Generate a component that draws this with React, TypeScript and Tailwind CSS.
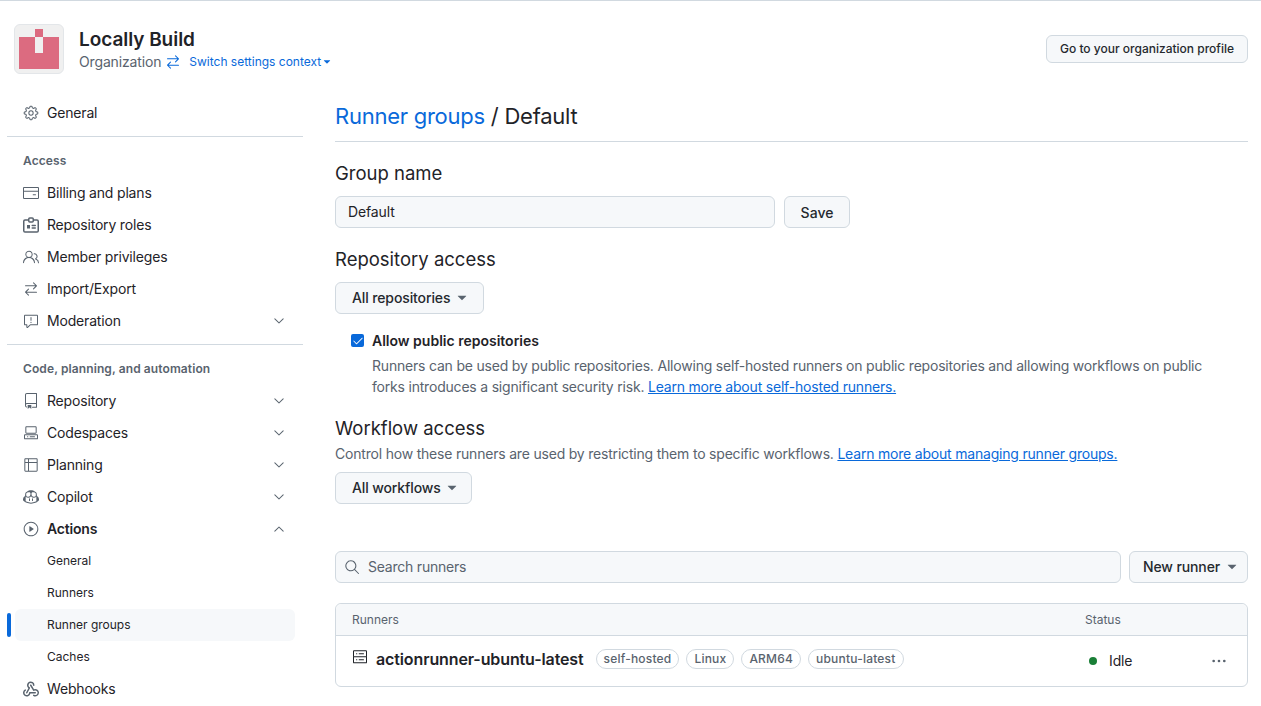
import {
  GoArrowSwitch,
  GoCheck,
  GoChevronDown,
  GoChevronUp,
  GoCodespaces,
  GoCopilot,
  GoCreditCard,
  GoGear,
  GoKebabHorizontal,
  GoPeople,
  GoPlay,
  GoReport,
  GoRepo,
  GoSearch,
  GoServer,
  GoTable,
  GoTriangleDown,
} from "react-icons/go"

type IconProps = { size?: number; className?: string }

// not in react-icons' octicons, drawn by hand
function IdBadgeIcon({ size = 16, className }: IconProps) {
  return (
    <svg width={size} height={size} viewBox="0 0 16 16" fill="none" stroke="currentColor" strokeWidth="1.5" className={className}>
      <path d="M5.5 3H2a1.25 1.25 0 0 0-1.25 1.25v9.5A1.25 1.25 0 0 0 2 15h12a1.25 1.25 0 0 0 1.25-1.25v-9.5A1.25 1.25 0 0 0 14 3h-3.5" />
      <rect x="5.75" y="1" width="4.5" height="4" rx="1" />
      <rect x="4" y="8" width="3" height="3.5" fill="currentColor" stroke="none" />
      <path d="M9.25 8.5h3M9.25 11h3" strokeLinecap="round" />
    </svg>
  )
}

function WebhookIcon({ size = 16, className }: IconProps) {
  return (
    <svg width={size} height={size} viewBox="0 0 16 16" fill="currentColor" className={className}>
      <path d="M5.5 4.25a2.25 2.25 0 0 1 4.5 0 .75.75 0 0 0 1.5 0 3.75 3.75 0 1 0-6.14 2.889l-2.272 4.258a.75.75 0 0 0 1.324.706L7 7.25a.75.75 0 0 0-.309-1.015A2.25 2.25 0 0 1 5.5 4.25Z" />
      <path d="M7.364 3.607a.75.75 0 0 1 1.03.257l2.608 4.349a3.75 3.75 0 1 1-.628 6.785.75.75 0 0 1 .752-1.299 2.25 2.25 0 1 0-.033-3.88.75.75 0 0 1-1.03-.256L7.107 4.636a.75.75 0 0 1 .257-1.03Z" />
      <path d="M2.9 8.776A.75.75 0 0 1 2.625 9.8 2.25 2.25 0 1 0 6 11.75a.75.75 0 0 1 .75-.751h5.5a.75.75 0 0 1 0 1.5H7.425a3.751 3.751 0 1 1-5.55-3.998.75.75 0 0 1 1.024.274Z" />
    </svg>
  )
}

function NavItem({
  icon: Icon,
  label,
  chevron,
  bold,
}: {
  icon: React.ComponentType<IconProps>
  label: string
  chevron?: "up" | "down"
  bold?: boolean
}) {
  return (
    <div className="h-8 flex items-center pl-4 pr-2 text-[14px] tracking-[-0.18px] text-[#1f2328]">
      <Icon size={16} className="text-[#59636e] mr-2 shrink-0" />
      <span className={bold ? "font-semibold -mt-[2px]" : "-mt-[2px]"}>{label}</span>
      {chevron === "down" && <GoChevronDown size={16} className="ml-auto text-[#59636e]" />}
      {chevron === "up" && <GoChevronUp size={16} className="ml-auto text-[#59636e]" />}
    </div>
  )
}

function SubItem({ label, active }: { label: string; active?: boolean }) {
  return (
    <div className="relative h-8 flex items-center pl-10 text-[12px] text-[#1f2328]">
      {active && (
        <>
          <div className="absolute left-0 top-[4px] w-1 h-6 rounded-md bg-[#0969da]" />
          <div className="absolute left-2 right-0 top-0 bottom-0 rounded-md bg-[#f6f8fa]" />
        </>
      )}
      <span className="relative">{label}</span>
    </div>
  )
}

function SelectButton({ label, className }: { label: string; className: string }) {
  return (
    <div
      className={`h-8 flex items-center gap-1 rounded-md border border-[#d1d9e0] bg-[#f6f8fa] text-[14px] tracking-[-0.12px] font-medium text-[#25292e] ${className}`}
    >
      <span className="-mt-[2px]">{label}</span>
      <GoTriangleDown size={16} className="text-[#59636e]" />
    </div>
  )
}

function Label({ children }: { children: string }) {
  return (
    <span className="h-5 flex items-center rounded-full border border-[#d1d9e0] px-[7px] text-[12px] tracking-[0.2px] font-medium text-[#59636e]">
      {children}
    </span>
  )
}

function SectionTitle({ children, className }: { children: string; className: string }) {
  return <h2 className={`text-[18.5px] leading-[28px] ${className}`}>{children}</h2>
}

export default function App() {
  return (
    <div className="h-[706px] overflow-hidden bg-white border-t border-[#d1d9e0] font-['Inter',sans-serif] text-[#1f2328]">
      <header className="flex items-center justify-between pt-[23px] pl-[14px] pr-[13px]">
        <div className="flex items-center">
          <div className="w-[50px] h-[50px] rounded-md border border-[#e3e6e9] bg-[#f0f0f0] shrink-0">
            <svg viewBox="0 0 48 48" className="w-full h-full">
              <rect x="4" y="12" width="40" height="32" fill="#dc6b80" />
              <rect x="20" y="4" width="8" height="8" fill="#dc6b80" />
              <rect x="20" y="12" width="8" height="16" fill="#f0f0f0" />
            </svg>
          </div>
          <div className="ml-[15px] -mt-[2px]">
            <div className="pt-px text-[19px] leading-[30px] tracking-[-0.05px] font-semibold">Locally Build</div>
            <div className="-mt-[3px] flex items-center text-[14px] leading-5 tracking-[-0.15px] text-[#59636e]">
              Organization
              <GoArrowSwitch size={16} className="text-[#0969da] ml-[4px] mr-[8px]" />
              <span className="text-[12px] tracking-normal text-[#0969da]">Switch settings context</span>
              <GoTriangleDown size={12} className="text-[#0969da]" />
            </div>
          </div>
        </div>
        <div className="h-7 w-[202px] flex items-center justify-center rounded-md border border-[#d1d9e0] bg-[#f6f8fa] text-[12px] font-medium text-[#25292e]">
          Go to your organization profile
        </div>
      </header>

      <div className="flex mt-[23px] pl-[7px] pr-[13px]">
        <aside className="w-[288px] shrink-0">
          <NavItem icon={GoGear} label="General" />
          <div className="h-px bg-[#d1d9e0] mt-[7px] -mr-2" />
          <div className="pl-4 mt-[16px] mb-[8px] h-4 flex items-center text-[12px] tracking-[0.1px] font-semibold text-[#59636e]">Access</div>
          <NavItem icon={GoCreditCard} label="Billing and plans" />
          <NavItem icon={IdBadgeIcon} label="Repository roles" />
          <NavItem icon={GoPeople} label="Member privileges" />
          <NavItem icon={GoArrowSwitch} label="Import/Export" />
          <NavItem icon={GoReport} label="Moderation" chevron="down" />
          <div className="h-px bg-[#d1d9e0] mt-[7px] -mr-2" />
          <div className="pl-4 mt-[16px] mb-[8px] h-4 flex items-center text-[12px] tracking-[0.1px] font-semibold text-[#59636e]">
            Code, planning, and automation
          </div>
          <NavItem icon={GoRepo} label="Repository" chevron="down" />
          <NavItem icon={GoCodespaces} label="Codespaces" chevron="down" />
          <NavItem icon={GoTable} label="Planning" chevron="down" />
          <NavItem icon={GoCopilot} label="Copilot" chevron="down" />
          <NavItem icon={GoPlay} label="Actions" chevron="up" bold />
          <SubItem label="General" />
          <SubItem label="Runners" />
          <SubItem label="Runner groups" active />
          <SubItem label="Caches" />
          <NavItem icon={WebhookIcon} label="Webhooks" />
        </aside>

        <main className="flex-1 ml-10 min-w-0">
          <h1 className="h-[45px] flex items-center border-b border-[#d1d9e0] pb-[8px] pt-[3px] text-[22px] tracking-[-0.25px] font-normal">
            <span className="text-[#0969da]">Runner groups</span>
            <span className="whitespace-pre"> / Default</span>
          </h1>

          <SectionTitle className="mt-[17px] pb-[2px]">Group name</SectionTitle>
          <div className="mt-[7px] flex gap-[9px]">
            <div className="w-[440px] h-8 flex items-center px-3 pb-[2px] rounded-md border border-[#d1d9e0] bg-[#f6f8fa] text-[14px] tracking-[-0.12px]">
              Default
            </div>
            <div className="w-[66px] h-8 flex items-center justify-center rounded-md border border-[#d1d9e0] bg-[#f6f8fa] text-[14px] font-medium text-[#25292e]">
              Save
            </div>
          </div>

          <SectionTitle className="mt-[17px] pb-[2px]">Repository access</SectionTitle>
          <SelectButton label="All repositories" className="mt-[7px] w-[149px] pl-4" />

          <div className="mt-[17px] pl-4 flex">
            <div className="mt-[3px] w-[13px] h-[13px] rounded-[2px] bg-[#0969da] flex items-center justify-center shrink-0">
              <GoCheck size={12} className="text-white" />
            </div>
            <div className="ml-2">
              <div className="text-[14px] leading-5 font-semibold">Allow public repositories</div>
              <p className="mt-[4px] max-w-[860px] text-[14px] leading-[21px] tracking-[-0.2px] text-[#59636e]">
                Runners can be used by public repositories. Allowing self-hosted runners on public repositories and
                allowing workflows on public forks introduces a significant security risk.{" "}
                <span className="text-[#0969da] underline">Learn more about self-hosted runners.</span>
              </p>
            </div>
          </div>

          <SectionTitle className="mt-[17px] pb-px">Workflow access</SectionTitle>
          <p className="text-[14px] leading-[21px] tracking-[-0.2px] text-[#59636e]">
            Control how these runners are used by restricting them to specific workflows.{" "}
            <span className="text-[#0969da] underline">Learn more about managing runner groups.</span>
          </p>
          <SelectButton label="All workflows" className="mt-[8px] w-[137px] pl-4 gap-[3px]" />

          <div className="mt-[47px] flex gap-2">
            <div className="flex-1 h-8 flex items-center rounded-md border border-[#d1d9e0] bg-[#f6f8fa] pl-2 text-[14px] tracking-[-0.22px] text-[#59636e]">
              <GoSearch size={16} className="mr-2" />
              <span className="-mt-[2px]">Search runners</span>
            </div>
            <SelectButton label="New runner" className="w-[119px] pl-[13px]" />
          </div>

          <div className="mt-[20px] rounded-md border border-[#d1d9e0]">
            <div className="h-[32px] flex items-center rounded-t-md border-b border-[#d1d9e0] bg-[#f6f8fa] pl-4 text-[12px] text-[#59636e]">
              <span className="flex-1">Runners</span>
              <span className="w-[162px]">Status</span>
            </div>
            <div className="h-[50px] flex items-center pl-4">
              <GoServer size={16} className="text-[#1f2328] shrink-0 -mt-[8px]" />
              <span className="ml-2 text-[16px] tracking-[-0.12px] font-semibold -mt-[4px]">actionrunner-ubuntu-latest</span>
              <div className="ml-3 flex gap-[7px] -mt-[4px]">
                <Label>self-hosted</Label>
                <Label>Linux</Label>
                <Label>ARM64</Label>
                <Label>ubuntu-latest</Label>
              </div>
              <div className="ml-auto w-[162px] flex items-center">
                <span className="ml-[4px] w-2 h-2 rounded-full bg-[#1a7f37]" />
                <span className="ml-[12px] w-[24px] text-[14px] tracking-[-0.12px] -mt-[2px]">Idle</span>
                <GoKebabHorizontal size={16} className="ml-[78px] text-[#59636e]" />
              </div>
            </div>
          </div>
        </main>
      </div>
    </div>
  )
}
